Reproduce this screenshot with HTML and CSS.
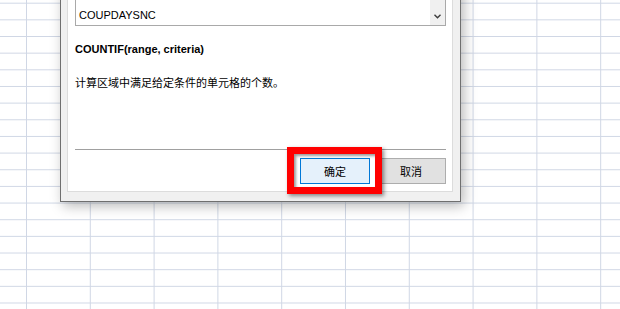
FILE: index.html
```html
<!DOCTYPE html>
<html lang="zh">
<head>
<meta charset="utf-8">
<link rel="stylesheet" href="styles.css">
</head>
<body>
<div class="sheet">
  <div class="dialog">
    <div class="panel">
      <div class="combo">
        <div class="combo-text">COUPDAYSNC</div>
        <div class="combo-scroll">
          <svg class="chev" width="7" height="5" viewBox="0 0 7 5"><polyline points="0.5,0.8 3.5,3.8 6.5,0.8" fill="none" stroke="#3c3c3c" stroke-width="1.4"/></svg>
        </div>
      </div>
      <div class="sig">COUNTIF(range, criteria)</div>
      <div class="desc">计算区域中满足给定条件的单元格的个数。</div>
      <div class="sep"></div>
      <div class="buttons">
        <button class="btn btn-ok">确定</button>
        <button class="btn">取消</button>
      </div>
    </div>
  </div>
  <div class="highlight"></div>
</div>
</body>
</html>
```

FILE: styles.css
```css
html, body {
  margin: 0;
  padding: 0;
}
body {
  width: 620px;
  height: 309px;
  overflow: hidden;
  background: #fff;
  font-family: "Liberation Sans", "Noto Sans CJK SC", sans-serif;
}
.sheet {
  position: relative;
  width: 620px;
  height: 309px;
  overflow: hidden;
  background-color: #fff;
  background-image:
    linear-gradient(to right, #d0d7e5 1px, transparent 1px),
    linear-gradient(to bottom, #d0d7e5 1px, transparent 1px);
  background-size: 63.8px 100%, 100% 16.667px;
  background-position: 26px 0, 0 2.7px;
}
.dialog {
  position: absolute;
  left: 60px;
  top: -40px;
  width: 386px;
  padding: 6px 7px 9px 6px;
  background: #f0f0f0;
  border: 1px solid #6f6f6f;
  box-shadow: 3px 4px 12px rgba(0, 0, 0, 0.28);
}
.panel {
  background: #fff;
  border: 1px solid #dcdcdc;
  padding: 0 6px 7px 7px;
  display: flex;
  flex-direction: column;
}
.combo {
  margin-top: 22px;
  height: 34px;
  border: 1px solid #a9a9a9;
  display: flex;
  align-items: flex-end;
  justify-content: space-between;
}
.combo-text {
  font-size: 11px;
  line-height: 14px;
  color: #000;
  padding: 0 0 3px 3px;
}
.combo-scroll {
  width: 15px;
  height: 100%;
  background: #f0f0f0;
  display: flex;
  align-items: flex-end;
  justify-content: center;
}
.chev {
  display: block;
  margin-bottom: 6px;
}
.sig {
  margin-top: 16px;
  font-size: 11px;
  line-height: 14px;
  font-weight: bold;
  color: #000;
}
.desc {
  margin-top: 19px;
  font-family: "Noto Sans CJK SC", sans-serif;
  font-size: 11px;
  line-height: 14px;
  color: #000;
}
.sep {
  margin-top: 60px;
  height: 1px;
  background: #a0a0a0;
}
.buttons {
  margin-top: 8px;
  display: flex;
  justify-content: flex-end;
  gap: 6px;
}
.btn {
  width: 70px;
  height: 26px;
  margin: 0;
  padding: 0;
  font-family: "Noto Sans CJK SC", sans-serif;
  font-size: 11px;
  color: #000;
  background: #e1e1e1;
  border: 1px solid #adadad;
  border-radius: 0;
}
.btn-ok {
  background: #e5f1fb;
  border-color: #0078d7;
}
.highlight {
  position: absolute;
  left: 287px;
  top: 147px;
  width: 81px;
  height: 33px;
  border: 7px solid #ff0000;
  box-shadow: 2px 2px 4px rgba(0, 0, 0, 0.45), inset 2px 2px 3px rgba(0, 0, 0, 0.4);
}
```
